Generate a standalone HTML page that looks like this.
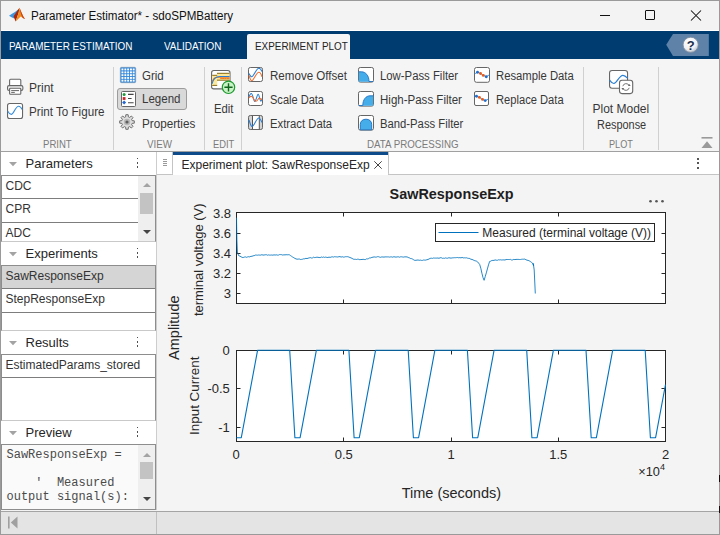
<!DOCTYPE html>
<html><head><meta charset="utf-8">
<style>
*{box-sizing:border-box;margin:0;padding:0}
html,body{width:720px;height:535px;overflow:hidden;background:#f3f3f3;font-family:"Liberation Sans",sans-serif;color:#222}
.a{position:absolute}
#win{position:absolute;left:0;top:0;width:720px;height:535px;overflow:hidden;background:#f3f3f3}
.t{position:absolute;white-space:nowrap;line-height:1}
</style></head><body>
<div id="win">
<!-- title bar -->
<div class="a" style="left:0;top:0;width:720px;height:30px;background:#f3f3f3"></div>
<div class="t" style="left:30.5px;top:9.6px;font-size:12.3px;color:#111;transform-origin:0 0;transform:scaleX(0.945)">Parameter Estimator* - sdoSPMBattery</div>
<svg class="a" style="left:0;top:0" width="30" height="30" viewBox="0 0 30 30">
 <path d="M9 15.8L12 13.8 15 12 18.5 9.2 17.8 13 15.5 16.8 14.2 18.6 12 17.5z" fill="#3f94dc"/>
 <path d="M13.6 16.2L16.5 12 19.5 7.8 18.6 13 17 17.5 15.6 21.6 14.4 18.5z" fill="#a8260e"/>
 <path d="M19.5 7.8L21.5 12.5 23.2 16.2 25 18.9 22.8 18.1 20.8 16.6 18.2 19 15.6 21.6 17 17.5 18.6 13z" fill="#ef8a1c"/>
 <path d="M19.5 7.8L21.5 12.5 23.2 16.2 25 18.9 22.8 18.1 21.3 15 20.2 11z" fill="#c8401a"/>
</svg>
<!-- window controls -->
<div class="a" style="left:600px;top:15px;width:10px;height:1px;background:#111"></div>
<div class="a" style="left:645px;top:10px;width:10px;height:10px;border:1px solid #111;border-radius:1px"></div>
<svg class="a" style="left:690px;top:10px" width="12" height="11" viewBox="0 0 12 11"><path d="M1 0.5L11 10.5M11 0.5L1 10.5" stroke="#111" stroke-width="1.05"/></svg>

<!-- tab bar -->
<div class="a" style="left:0;top:30px;width:720px;height:1px;background:#fff"></div>
<div class="a" style="left:0;top:31px;width:720px;height:28px;background:#003c70"></div>
<div class="t" style="left:9px;top:40.6px;font-size:11px;color:#fff;transform-origin:0 0;transform:scaleX(0.9)">PARAMETER ESTIMATION</div>
<div class="t" style="left:164px;top:40.6px;font-size:11px;color:#fff;transform-origin:0 0;transform:scaleX(0.9)">VALIDATION</div>
<div class="a" style="left:247px;top:34px;width:103px;height:25px;background:#f5f5f5;border-radius:2px 2px 0 0"></div>
<svg class="a" style="left:660px;top:31px" width="60" height="28" viewBox="0 0 60 28">
 <path d="M6.2 13.8L13 3H48.8V25H13z" fill="#5f82a9"/>
 <defs><radialGradient id="hg" cx="0.4" cy="0.3" r="0.8"><stop offset="0" stop-color="#fff"/><stop offset="0.6" stop-color="#eef1f5"/><stop offset="1" stop-color="#aab4c0"/></radialGradient></defs>
 <circle cx="30.7" cy="13.8" r="7.6" fill="url(#hg)" stroke="#7a8898" stroke-width="0.8"/>
 <text x="30.7" y="18.6" font-size="13" font-weight="bold" fill="#1d2f4a" text-anchor="middle" font-family="Liberation Sans, sans-serif">?</text>
</svg>
<div class="t" style="left:255px;top:40.6px;font-size:11px;color:#222;transform-origin:0 0;transform:scaleX(0.9)">EXPERIMENT PLOT</div>

<!-- ribbon -->
<div class="a" style="left:0;top:59px;width:720px;height:93px;background:#f5f5f5;border-bottom:1px solid #a0a0a0"></div>


<!-- ribbon content -->
<style>
.rt{position:absolute;white-space:nowrap;line-height:1;font-size:12px;color:#383838;transform-origin:0 0}
.sl{position:absolute;white-space:nowrap;line-height:1;font-size:11px;color:#7b7b7b;transform-origin:0 0}
.sep{position:absolute;width:1px;background:#d0d0d0;top:67px;height:83px}
.ic{position:absolute;overflow:visible}
</style>
<div class="sep" style="left:113px"></div>
<div class="sep" style="left:204px"></div>
<div class="sep" style="left:241px"></div>
<div class="sep" style="left:583px"></div>
<div class="sep" style="left:658px"></div>

<!-- PRINT -->
<svg class="ic" style="left:7px;top:79px" width="16" height="16" viewBox="0 0 16 16">
 <path d="M2.6 6.6V1.3a1 1 0 0 1 1-1h9.2a1 1 0 0 1 1 1v5.3" fill="#fff" stroke="#666" stroke-width="1.1"/>
 <rect x="0.55" y="6.6" width="15.3" height="4.8" rx="1.5" fill="#f2f2f2" stroke="#666" stroke-width="1.1"/>
 <rect x="2.6" y="9.3" width="11.2" height="6" rx="0.8" fill="#fff" stroke="#666" stroke-width="1.1"/>
 <path d="M4.2 11.6h7.8M4.2 13.4h3.6" stroke="#666" stroke-width="1"/>
</svg>
<div class="rt" style="left:29px;top:81.7px">Print</div>
<svg class="ic" style="left:7px;top:103px" width="16" height="16" viewBox="0 0 16 16">
 <rect x="0.55" y="0.55" width="15" height="15" rx="2" fill="#fff" stroke="#666" stroke-width="1.1"/>
 <path d="M0.8 8.3C2 10.5 3.2 11.4 4.3 11.4C6.5 11.4 8.5 3.3 11.6 3.3C13 3.3 14.3 4.8 15.2 6.6" fill="none" stroke="#3a8fd9" stroke-width="1.1"/>
</svg>
<div class="rt" style="left:29px;top:105.8px;transform:scaleX(0.97)">Print To Figure</div>
<div class="sl" style="left:43px;top:138.7px;transform:scaleX(0.87)">PRINT</div>

<!-- VIEW -->
<svg class="ic" style="left:120px;top:67px" width="16" height="16" viewBox="0 0 16 16">
 <rect x="0.3" y="0.3" width="15.4" height="15.4" rx="1.2" fill="#2f87dc" stroke="#7f96ad" stroke-width="0.6"/>
 <g fill="#fff">
 <rect x="1.5" y="1.5" width="1.9" height="1.9"/><rect x="4.4" y="1.5" width="1.9" height="1.9"/><rect x="7.2" y="1.5" width="1.9" height="1.9"/><rect x="10" y="1.5" width="1.9" height="1.9"/><rect x="12.7" y="1.5" width="1.9" height="1.9"/>
 <rect x="1.5" y="4.4" width="1.9" height="1.9"/><rect x="4.4" y="4.4" width="1.9" height="1.9"/><rect x="7.2" y="4.4" width="1.9" height="1.9"/><rect x="10" y="4.4" width="1.9" height="1.9"/><rect x="12.7" y="4.4" width="1.9" height="1.9"/>
 <rect x="1.5" y="7.2" width="1.9" height="1.9"/><rect x="4.4" y="7.2" width="1.9" height="1.9"/><rect x="7.2" y="7.2" width="1.9" height="1.9"/><rect x="10" y="7.2" width="1.9" height="1.9"/><rect x="12.7" y="7.2" width="1.9" height="1.9"/>
 <rect x="1.5" y="10" width="1.9" height="1.9"/><rect x="4.4" y="10" width="1.9" height="1.9"/><rect x="7.2" y="10" width="1.9" height="1.9"/><rect x="10" y="10" width="1.9" height="1.9"/><rect x="12.7" y="10" width="1.9" height="1.9"/>
 <rect x="1.5" y="12.7" width="1.9" height="1.9"/><rect x="4.4" y="12.7" width="1.9" height="1.9"/><rect x="7.2" y="12.7" width="1.9" height="1.9"/><rect x="10" y="12.7" width="1.9" height="1.9"/><rect x="12.7" y="12.7" width="1.9" height="1.9"/>
 </g>
</svg>
<div class="rt" style="left:142.3px;top:70.2px;transform:scaleX(0.96)">Grid</div>
<div class="a" style="left:117px;top:88px;width:70px;height:21.5px;background:#d9d9d9;border:1px solid #9c9c9c;border-radius:3px"></div>
<svg class="ic" style="left:121px;top:91px" width="15" height="16" viewBox="0 0 15 16">
 <rect x="0.5" y="0.5" width="14" height="15" rx="1" fill="#fff" stroke="#666" stroke-width="1"/>
 <circle cx="3.1" cy="3.4" r="1.5" fill="#1f9a3a"/><rect x="1.7" y="6.1" width="2.8" height="2.8" fill="#c8262a"/><path d="M3.1 9.6l2 2-2 2-2-2z" fill="#2468d0"/>
 <path d="M7 3.4h5.6M7 7.5h3.6M7 11.7h5.6" stroke="#444" stroke-width="1.1"/>
</svg>
<div class="rt" style="left:142.3px;top:93.4px;transform:scaleX(0.96)">Legend</div>
<svg class="ic" style="left:119.4px;top:114.1px" width="16" height="16" viewBox="0 0 16 16">
 <path fill="#dedede" stroke="#6e6e6e" stroke-width="1" stroke-linejoin="round" d="M6.64 2.88 L6.84 0.69 L9.16 0.69 L9.36 2.88 L10.66 3.42 L12.35 2.01 L13.99 3.65 L12.58 5.34 L13.12 6.64 L15.31 6.84 L15.31 9.16 L13.12 9.36 L12.58 10.66 L13.99 12.35 L12.35 13.99 L10.66 12.58 L9.36 13.12 L9.16 15.31 L6.84 15.31 L6.64 13.12 L5.34 12.58 L3.65 13.99 L2.01 12.35 L3.42 10.66 L2.88 9.36 L0.69 9.16 L0.69 6.84 L2.88 6.64 L3.42 5.34 L2.01 3.65 L3.65 2.01 L5.34 3.42z"/>
 <circle cx="8" cy="8" r="3.2" fill="#b8b8b8"/><circle cx="8" cy="8" r="1.6" fill="#5e5e5e"/>
</svg>
<div class="rt" style="left:142.3px;top:118px;transform:scaleX(0.975)">Properties</div>
<div class="sl" style="left:147px;top:138.7px;transform:scaleX(0.89)">VIEW</div>

<!-- EDIT -->
<svg class="ic" style="left:211px;top:70px" width="25" height="25" viewBox="0 0 25 25">
 <rect x="0.6" y="0.5" width="18.4" height="18.4" rx="2.2" fill="#fff" stroke="#666" stroke-width="1.1"/>
 <rect x="1.2" y="5.3" width="5" height="10" fill="#fde89a"/>
 <rect x="6" y="3.2" width="12.5" height="7" fill="#fde89a"/>
 <path d="M1.2 5.3h5M1.2 15.4h5M6 3.3h12.5M6 10.2h12.5" stroke="#7a5a00" stroke-width="0.9"/>
 <path d="M1 12C2.5 8 4 7 9 7.2H18.5" fill="none" stroke="#f07820" stroke-width="1.1"/>
 <path d="M1 13.8C2.5 9 4 6.5 9 6.5H18.5" fill="none" stroke="#2a7fd4" stroke-width="1.1"/>
 <path d="M9 8.2C12 8.8 14 8.4 18.5 8.6" fill="none" stroke="#f07820" stroke-width="1"/>
 <circle cx="17.5" cy="17.3" r="6.2" fill="#c9f3c6" stroke="#1e9a30" stroke-width="1.2"/>
 <path d="M17.5 13.2v8.2M13.4 17.3h8.2" stroke="#10661c" stroke-width="1.4"/>
</svg>
<div class="rt" style="left:214px;top:103.2px;transform:scaleX(0.94)">Edit</div>
<div class="sl" style="left:212.7px;top:138.7px;transform:scaleX(0.85)">EDIT</div>

<!-- DATA PROCESSING -->
<svg class="ic" style="left:248px;top:67px" width="15" height="15" viewBox="0 0 15 15">
 <rect x="0.5" y="0.5" width="14" height="14" rx="1.8" fill="#fff" stroke="#666" stroke-width="1"/>
 <path d="M1 6.5C2 8.5 2.8 9.8 3.6 9.8C6 9.8 8 1.3 10.9 1.3C12.3 1.3 13.3 3 14 4.6" fill="none" stroke="#2a7fd4" stroke-width="1.1"/>
 <path d="M1 8.5C2 11.5 2.8 13.8 3.6 13.8C6 13.8 8 5.2 10.9 5.2C12.3 5.2 13.3 7.5 14 9.8" fill="none" stroke="#f07030" stroke-width="1.1"/>
</svg>
<div class="rt" style="left:270px;top:69.8px;transform:scaleX(0.965)">Remove Offset</div>
<svg class="ic" style="left:248px;top:91px" width="15" height="15" viewBox="0 0 15 15">
 <rect x="0.5" y="0.5" width="14" height="14" rx="1.8" fill="#fff" stroke="#666" stroke-width="1"/>
 <path d="M1 6C1.8 3.5 2.6 2.5 3.3 2.5C4.8 2.5 5.5 10.5 6.8 10.5S9 3.2 10.1 3.2S12 10.2 12.8 10.2C13.4 10.2 13.8 8.5 14.2 7.5" fill="none" stroke="#2a7fd4" stroke-width="1.1"/>
 <path d="M1 7C2 5.5 3 5 4 5.6C5.5 6.5 6.2 10 7.8 10.3C9.5 10.6 10 7.5 11 7.2C12.2 6.9 13 8.5 14.2 8.8" fill="none" stroke="#f07030" stroke-width="1.1"/>
</svg>
<div class="rt" style="left:270px;top:93.6px;transform:scaleX(0.92)">Scale Data</div>
<svg class="ic" style="left:248px;top:115px" width="15" height="15" viewBox="0 0 15 15">
 <rect x="0.5" y="0.5" width="14" height="14" rx="1.8" fill="#d4d4d4" stroke="#666" stroke-width="1"/>
 <rect x="4.5" y="1" width="6.8" height="13" fill="#fff"/>
 <path d="M4.5 1v13M11.3 1v13" stroke="#555" stroke-width="1"/>
 <path d="M1 5C2 8 2.8 11.5 4 11.5C6 11.5 8.5 3 10.8 3C12 3 13 5.5 14 7.5" fill="none" stroke="#2a7fd4" stroke-width="1.1"/>
</svg>
<div class="rt" style="left:270px;top:117.6px;transform:scaleX(0.94)">Extract Data</div>

<svg class="ic" style="left:358px;top:67px" width="16" height="16" viewBox="0 0 16 16">
 <rect x="0.5" y="0.5" width="15" height="14.6" rx="1.8" fill="#fff" stroke="#666" stroke-width="1"/>
 <path d="M0.8 4.8H3.5C7.5 4.8 11 8.5 11 14.8H0.8z" fill="#45aeea"/>
 <path d="M0.8 4.8H3.5C7.5 4.8 11 8.5 11 14.5H15.2" fill="none" stroke="#1f6fbf" stroke-width="0.9"/>
</svg>
<div class="rt" style="left:380px;top:69.8px;transform:scaleX(0.945)">Low-Pass Filter</div>
<svg class="ic" style="left:358px;top:91px" width="16" height="16" viewBox="0 0 16 16">
 <rect x="0.5" y="0.5" width="15" height="14.6" rx="1.8" fill="#fff" stroke="#666" stroke-width="1"/>
 <path d="M15.2 4.8H12C8 4.8 4.8 8.5 4.8 14.8H15.2z" fill="#45aeea"/>
 <path d="M15.2 4.8H12C8 4.8 4.8 8.5 4.8 14.5H0.8" fill="none" stroke="#1f6fbf" stroke-width="0.9"/>
</svg>
<div class="rt" style="left:380px;top:93.6px;transform:scaleX(0.96)">High-Pass Filter</div>
<svg class="ic" style="left:358px;top:115px" width="16" height="16" viewBox="0 0 16 16">
 <rect x="0.5" y="0.5" width="15" height="14.6" rx="1.8" fill="#fff" stroke="#666" stroke-width="1"/>
 <path d="M2.3 14.8V9.5C2.3 6 4.8 4.2 8 4.2S13.7 6 13.7 9.5V14.8z" fill="#45aeea" stroke="#1f6fbf" stroke-width="0.9"/>
</svg>
<div class="rt" style="left:380px;top:117.6px;transform:scaleX(0.94)">Band-Pass Filter</div>

<svg class="ic" style="left:474px;top:67px" width="16" height="16" viewBox="0 0 16 16">
 <rect x="0.5" y="0.5" width="15" height="14.8" rx="2" fill="#fff" stroke="#666" stroke-width="1"/>
 <path d="M0.6 6.8L3.5 5.3 6.5 6.5 9.3 8.4 12.3 9.7 15.4 7.8" fill="none" stroke="#2a7fd4" stroke-width="0.8"/>
 <circle cx="3.5" cy="5.3" r="1.45" fill="#1f6fd0"/><circle cx="6.5" cy="6.5" r="1.45" fill="#e85a1a"/><circle cx="9.3" cy="8.4" r="1.45" fill="#e85a1a"/><circle cx="12.3" cy="9.7" r="1.45" fill="#1f6fd0"/>
</svg>
<div class="rt" style="left:496px;top:69.8px;transform:scaleX(0.94)">Resample Data</div>
<svg class="ic" style="left:474px;top:91px" width="15" height="15" viewBox="0 0 15 15">
 <rect x="0.5" y="0.5" width="14" height="14" rx="1.5" fill="#fff" stroke="#666" stroke-width="1"/>
 <path d="M0.6 5.2L2.5 5.3 5.4 6.4 8.5 8.4 11.2 9.6 14.4 8" fill="none" stroke="#2a7fd4" stroke-width="0.8"/>
 <circle cx="2.5" cy="5.3" r="1.45" fill="#1f6fd0"/><circle cx="5.4" cy="6.4" r="1.45" fill="#e85a1a"/><circle cx="8.5" cy="8.4" r="1.45" fill="#e85a1a"/><circle cx="11.2" cy="9.6" r="1.45" fill="#1f6fd0"/>
</svg>
<div class="rt" style="left:496px;top:93.6px;transform:scaleX(0.93)">Replace Data</div>
<div class="sl" style="left:366.8px;top:138.7px;transform:scaleX(0.885)">DATA PROCESSING</div>

<!-- PLOT -->
<svg class="ic" style="left:609px;top:70px" width="25" height="25" viewBox="0 0 25 25">
 <rect x="0.55" y="0.5" width="18" height="17.7" rx="2.5" fill="#fff" stroke="#666" stroke-width="1.1"/>
 <path d="M0.6 10.2C2 12.2 3.5 13.5 4.8 13.5C8 13.5 10 5.3 13.9 5.3C15.8 5.3 17.3 6.8 18.5 8.1" fill="none" stroke="#2a7fd4" stroke-width="1.2"/>
 <rect x="10.5" y="10.2" width="13.2" height="13.4" rx="2.5" fill="#fff" stroke="#666" stroke-width="1.1"/>
 <path d="M13.8 16.2a3.4 3.4 0 0 1 6.4 -0.6M20.2 17.8a3.4 3.4 0 0 1 -6.4 0.6" fill="none" stroke="#666" stroke-width="0.9"/>
 <path d="M18.9 16.1h2.8l-1.4 -2.2zM12.4 17.9h2.8l-1.4 2.2z" fill="#666"/>
</svg>
<div class="rt" style="left:592.5px;top:102.6px">Plot Model</div>
<div class="rt" style="left:596.5px;top:118.7px;transform:scaleX(0.91)">Response</div>
<div class="sl" style="left:608.8px;top:138.7px;transform:scaleX(0.83)">PLOT</div>
<svg class="ic" style="left:701px;top:137px" width="12" height="12" viewBox="0 0 12 12">
 <rect x="0.5" y="0" width="11" height="1.6" fill="#9a9a9a"/>
 <path d="M0.5 11L6 4.2 11.5 11z" fill="#9a9a9a"/>
</svg>
<!-- left panel -->
<div class="a" style="left:0;top:152px;width:157px;height:358px;background:#fff;border-right:1px solid #cdcdcd"></div>
<style>.li{position:absolute;white-space:nowrap;line-height:1;font-size:12px;color:#333}</style>
<div class="a" style="left:1px;top:152px;width:155px;height:23px;background:#fff"></div>
<svg class="a" style="left:9px;top:162px" width="8" height="5" viewBox="0 0 8 5"><path d="M0 0H8L4 4.3z" fill="#a3a3a3"/></svg>
<div class="t" style="left:25.5px;top:156.9px;font-size:13px;color:#262626">Parameters</div>
<div class="a" style="left:136.7px;top:157.7px;width:1.7px;height:1.7px;background:#505050"></div>
<div class="a" style="left:136.7px;top:162.0px;width:1.7px;height:1.7px;background:#505050"></div>
<div class="a" style="left:136.7px;top:166.4px;width:1.7px;height:1.7px;background:#505050"></div>

<div class="a" style="left:1px;top:175px;width:155px;height:67px;background:#fff;border:1px solid #8d8d8d;border-bottom-color:#c9c9c9"></div>
<div class="li" style="left:5.5px;top:179.5px">CDC</div>
<div class="a" style="left:2px;top:198px;width:136px;height:1px;background:#7d7d7d"></div>
<div class="li" style="left:5.5px;top:203px">CPR</div>
<div class="a" style="left:2px;top:222px;width:136px;height:1px;background:#7d7d7d"></div>
<div class="li" style="left:5.5px;top:227px">ADC</div>
<div class="a" style="left:138px;top:176px;width:17px;height:65px;background:#efefef"></div>
<svg class="a" style="left:143px;top:183px" width="8" height="4" viewBox="0 0 8 4"><path d="M0 4H8L4 0z" fill="#a3a3a3"/></svg>
<div class="a" style="left:140px;top:193px;width:13px;height:21px;background:#c3c3c3"></div>
<svg class="a" style="left:143px;top:230px" width="8" height="4" viewBox="0 0 8 4"><path d="M0 0H8L4 4z" fill="#454545"/></svg>
<div class="a" style="left:1px;top:242px;width:155px;height:23px;background:#fff"></div>
<svg class="a" style="left:9px;top:252px" width="8" height="5" viewBox="0 0 8 5"><path d="M0 0H8L4 4.3z" fill="#a3a3a3"/></svg>
<div class="t" style="left:25.5px;top:246.9px;font-size:13px;color:#262626">Experiments</div>
<div class="a" style="left:136.7px;top:247.7px;width:1.7px;height:1.7px;background:#505050"></div>
<div class="a" style="left:136.7px;top:252.0px;width:1.7px;height:1.7px;background:#505050"></div>
<div class="a" style="left:136.7px;top:256.4px;width:1.7px;height:1.7px;background:#505050"></div>

<div class="a" style="left:1px;top:265px;width:155px;height:66px;background:#fff;border:1px solid #8d8d8d;border-bottom-color:#c9c9c9"></div>
<div class="a" style="left:2px;top:266px;width:153px;height:22px;background:#d5d5d5"></div>
<div class="li" style="left:5.5px;top:269.5px">SawResponseExp</div>
<div class="a" style="left:2px;top:288px;width:153px;height:1px;background:#7d7d7d"></div>
<div class="li" style="left:5.5px;top:293px">StepResponseExp</div>
<div class="a" style="left:2px;top:312px;width:153px;height:1px;background:#7d7d7d"></div>
<div class="a" style="left:1px;top:331px;width:155px;height:23px;background:#fff"></div>
<svg class="a" style="left:9px;top:341px" width="8" height="5" viewBox="0 0 8 5"><path d="M0 0H8L4 4.3z" fill="#a3a3a3"/></svg>
<div class="t" style="left:25.5px;top:335.9px;font-size:13px;color:#262626">Results</div>
<div class="a" style="left:136.7px;top:336.7px;width:1.7px;height:1.7px;background:#505050"></div>
<div class="a" style="left:136.7px;top:341.0px;width:1.7px;height:1.7px;background:#505050"></div>
<div class="a" style="left:136.7px;top:345.4px;width:1.7px;height:1.7px;background:#505050"></div>

<div class="a" style="left:1px;top:354px;width:155px;height:67px;background:#fff;border:1px solid #8d8d8d;border-bottom-color:#c9c9c9"></div>
<div class="li" style="left:5.5px;top:358.5px">EstimatedParams_stored</div>
<div class="a" style="left:2px;top:377px;width:153px;height:1px;background:#7d7d7d"></div>
<div class="a" style="left:1px;top:421px;width:155px;height:23px;background:#fff"></div>
<svg class="a" style="left:9px;top:431px" width="8" height="5" viewBox="0 0 8 5"><path d="M0 0H8L4 4.3z" fill="#a3a3a3"/></svg>
<div class="t" style="left:25.5px;top:425.9px;font-size:13px;color:#262626">Preview</div>
<div class="a" style="left:136.7px;top:426.7px;width:1.7px;height:1.7px;background:#505050"></div>
<div class="a" style="left:136.7px;top:431.0px;width:1.7px;height:1.7px;background:#505050"></div>
<div class="a" style="left:136.7px;top:435.4px;width:1.7px;height:1.7px;background:#505050"></div>

<div class="a" style="left:1px;top:444px;width:155px;height:66px;background:#fafafa;border:1px solid #8d8d8d"></div>
<style>.mo{position:absolute;white-space:pre;line-height:1;font-family:"Liberation Mono",monospace;font-size:12px;color:#4a4a4a}</style>
<div class="mo" style="left:6.5px;top:449px">SawResponseExp =</div>
<div class="mo" style="left:6.5px;top:477px">    '  Measured</div>
<div class="mo" style="left:6.5px;top:491px">output signal(s):</div>
<div class="a" style="left:138px;top:445px;width:17px;height:64px;background:#efefef"></div>
<svg class="a" style="left:143px;top:453px" width="8" height="4" viewBox="0 0 8 4"><path d="M0 4H8L4 0z" fill="#a3a3a3"/></svg>
<div class="a" style="left:140px;top:462px;width:13px;height:17px;background:#c3c3c3"></div>
<svg class="a" style="left:143px;top:497px" width="8" height="4" viewBox="0 0 8 4"><path d="M0 0H8L4 4z" fill="#454545"/></svg>


<!-- doc area -->
<div class="a" style="left:157px;top:152px;width:563px;height:359px;background:#f4f4f4"></div>
<!-- tab strip -->
<div class="a" style="left:157px;top:152px;width:563px;height:23px;background:#fff;border-bottom:1px solid #c4c4c4"></div>
<div class="a" style="left:157px;top:152px;width:16px;height:23px;background:#fff;border-right:1px solid #c4c4c4;border-bottom:1px solid #c4c4c4;border-bottom-right-radius:2px"></div>
<div class="a" style="left:162.5px;top:159px;width:4.2px;height:1px;background:#9a9a9a"></div>
<div class="a" style="left:162.5px;top:161px;width:4.2px;height:1px;background:#9a9a9a"></div>
<div class="a" style="left:162.5px;top:163px;width:4.2px;height:1px;background:#9a9a9a"></div>
<div class="a" style="left:162.5px;top:165px;width:4.2px;height:1px;background:#9a9a9a"></div>
<div class="a" style="left:173px;top:152px;width:215px;height:23px;background:#fff"></div>
<div class="a" style="left:173px;top:152px;width:215px;height:2.6px;background:#0d4b8a"></div>
<div class="a" style="left:388px;top:152px;width:332px;height:23px;background:#fff;border-left:1px solid #c4c4c4;border-bottom:1px solid #c4c4c4;border-bottom-left-radius:2px"></div>
<div class="t" style="left:181.5px;top:159.4px;font-size:12px;color:#262626">Experiment plot: SawResponseExp</div>
<svg class="a" style="left:374px;top:161px" width="8" height="8" viewBox="0 0 8 8"><path d="M0.3 0.3L7.7 7.7M7.7 0.3L0.3 7.7" stroke="#444" stroke-width="1"/></svg>
<div class="a" style="left:697px;top:158px;width:2px;height:2px;background:#555"></div>
<div class="a" style="left:697px;top:162.4px;width:2px;height:2px;background:#555"></div>
<div class="a" style="left:697px;top:166.8px;width:2px;height:2px;background:#555"></div>

<!-- plot -->
<svg class="a" style="left:0;top:0" width="720" height="535" viewBox="0 0 720 535" font-family="Liberation Sans, sans-serif">
 <rect x="236.5" y="212.5" width="429" height="91" fill="#fff" stroke="#262626" stroke-width="1"/>
 <rect x="236.5" y="350.5" width="429" height="91" fill="#fff" stroke="#262626" stroke-width="1"/>
 <g stroke="#262626" stroke-width="1">
  <path d="M343.5 212.5v4M451.5 212.5v4M558.5 212.5v4M343.5 303.5v-4M451.5 303.5v-4M558.5 303.5v-4"/>
  <path d="M236.5 233.5h4M236.5 253.5h4M236.5 273.5h4M236.5 293.5h4M665.5 233.5h-4M665.5 253.5h-4M665.5 273.5h-4M665.5 293.5h-4"/>
  <path d="M343.5 350.5v4M451.5 350.5v4M558.5 350.5v4M343.5 441.5v-4M451.5 441.5v-4M558.5 441.5v-4"/>
  <path d="M236.5 388.5h4M236.5 427.5h4M665.5 388.5h-4M665.5 427.5h-4"/>
 </g>
 <path d="M236.5 217.7 L236.9 240.0 L237.4 252.0 L238.5 255.5 L238.8 255.5 L239.9 256.2 L241.0 256.7 L242.1 257.4 L243.2 257.5 L244.3 257.1 L245.4 256.9 L246.5 257.3 L247.6 256.9 L248.7 256.7 L249.8 256.9 L250.9 256.3 L252.0 256.3 L253.1 255.8 L254.2 255.7 L255.3 255.1 L256.4 255.1 L257.5 255.2 L258.6 255.0 L259.7 255.1 L260.8 255.1 L261.9 254.7 L263.0 255.1 L264.1 255.0 L265.2 254.8 L266.3 254.7 L267.4 255.2 L268.5 254.9 L269.6 255.1 L270.7 255.1 L271.8 255.0 L272.9 255.2 L274.0 254.8 L275.1 255.1 L276.2 254.8 L277.3 255.1 L278.4 255.1 L279.5 254.6 L280.6 254.6 L281.7 254.7 L282.8 255.1 L283.9 254.8 L285.0 254.9 L286.1 254.7 L287.2 254.8 L288.3 254.7 L289.4 254.8 L290.5 255.6 L291.6 256.3 L292.7 257.1 L293.8 257.7 L294.9 258.4 L296.0 258.9 L297.1 259.2 L298.2 259.1 L299.3 259.0 L300.4 259.5 L301.5 259.4 L302.6 259.2 L303.7 258.8 L304.8 258.8 L305.9 258.3 L307.0 258.6 L308.1 258.2 L309.2 257.9 L310.3 257.6 L311.4 258.0 L312.5 257.9 L313.6 257.2 L314.7 257.6 L315.8 257.4 L316.9 257.2 L318.0 257.3 L319.1 257.5 L320.2 257.6 L321.3 257.0 L322.4 257.4 L323.5 257.0 L324.6 257.4 L325.7 257.1 L326.8 257.4 L327.9 257.5 L329.0 257.1 L330.1 257.4 L331.2 257.0 L332.3 256.8 L333.4 257.1 L334.5 256.7 L335.6 256.8 L336.7 256.9 L337.8 257.0 L338.9 256.7 L340.0 256.6 L341.1 257.1 L342.2 256.7 L343.3 257.1 L344.4 257.0 L345.5 256.7 L346.6 256.7 L347.7 256.7 L348.8 257.0 L349.9 257.5 L351.0 257.9 L352.1 258.4 L353.2 259.1 L354.3 259.3 L355.4 259.3 L356.5 259.5 L357.6 259.2 L358.7 259.3 L359.8 259.7 L360.9 259.5 L362.0 259.5 L363.1 259.3 L364.2 259.5 L365.3 259.6 L366.4 258.9 L367.5 258.9 L368.6 258.6 L369.7 257.9 L370.8 257.9 L371.9 257.4 L373.0 257.2 L374.1 256.9 L375.2 257.1 L376.3 257.1 L377.4 256.7 L378.5 256.7 L379.6 257.1 L380.7 257.3 L381.8 256.9 L382.9 257.0 L384.0 257.1 L385.1 256.9 L386.2 256.9 L387.3 256.9 L388.4 256.9 L389.5 257.1 L390.6 256.9 L391.7 256.9 L392.8 257.2 L393.9 256.7 L395.0 257.0 L396.1 257.1 L397.2 256.9 L398.3 256.8 L399.4 257.2 L400.5 256.8 L401.6 256.8 L402.7 257.0 L403.8 257.1 L404.9 256.8 L406.0 256.9 L407.1 256.9 L408.2 257.5 L409.3 257.8 L410.4 258.5 L411.5 258.6 L412.6 259.1 L413.7 259.8 L414.8 260.4 L415.9 260.3 L417.0 260.1 L418.1 260.0 L419.2 260.3 L420.3 260.1 L421.4 260.4 L422.5 260.4 L423.6 260.0 L424.7 260.1 L425.8 260.1 L426.9 259.7 L428.0 259.5 L429.1 258.9 L430.2 258.4 L431.3 258.2 L432.4 258.4 L433.5 258.0 L434.6 258.1 L435.7 258.1 L436.8 258.1 L437.9 258.0 L439.0 258.3 L440.1 257.8 L441.2 257.7 L442.3 258.3 L443.4 258.2 L444.5 258.3 L445.6 257.9 L446.7 258.2 L447.8 258.2 L448.9 257.7 L450.0 258.0 L451.1 258.1 L452.2 257.9 L453.3 257.8 L454.4 257.7 L455.5 257.7 L456.6 257.6 L457.7 257.5 L458.8 257.8 L459.9 257.6 L461.0 257.9 L462.1 257.4 L463.2 257.9 L464.3 257.8 L465.4 257.9 L466.5 257.8 L467.6 258.2 L468.7 258.4 L469.8 258.5 L470.9 259.3 L472.0 259.4 L473.1 259.9 L474.2 260.5 L475.3 260.8 L476.4 261.1 L477.5 261.8 L478.6 263.1 L479.7 264.5 L480.8 268.2 L481.9 273.2 L483.0 277.6 L484.1 280.3 L485.2 276.7 L486.3 272.9 L487.4 268.9 L488.5 264.9 L489.6 261.5 L490.7 261.2 L491.8 260.5 L492.9 260.4 L494.0 260.4 L495.1 259.9 L496.2 260.2 L497.3 260.3 L498.4 259.8 L499.5 259.9 L500.6 259.8 L501.7 260.0 L502.8 259.9 L503.9 259.9 L505.0 260.0 L506.1 259.5 L507.2 259.5 L508.3 259.5 L509.4 259.5 L510.5 259.4 L511.6 260.0 L512.7 259.9 L513.8 259.4 L514.9 259.6 L516.0 259.4 L517.1 259.4 L518.2 259.4 L519.3 259.5 L520.4 259.5 L521.5 259.3 L522.6 259.2 L523.7 259.2 L524.8 259.1 L525.9 259.7 L527.0 260.2 L528.1 260.4 L529.2 260.8 L530.3 261.5 L531.4 262.3 L532.5 263.1 L533.6 265.8 L533.3 263.5 L534.2 270.0 L535.3 293.5" fill="none" stroke="#0072bd" stroke-width="0.85" stroke-linejoin="round"/>
 <path d="M236.5 437.7 L241.3 437.7 L257.6 350.2 L289.7 350.2 L294.9 437.7 L300.1 437.7 L316.4 350.2 L348.9 350.2 L354.1 437.7 L359.3 437.7 L375.6 350.2 L408.2 350.2 L413.4 437.7 L418.6 437.7 L434.9 350.2 L467.4 350.2 L472.6 437.7 L477.8 437.7 L494.1 350.2 L526.7 350.2 L531.9 437.7 L537.1 437.7 L553.4 350.2 L586.0 350.2 L591.2 437.7 L596.4 437.7 L612.7 350.2 L645.2 350.2 L650.4 437.7 L655.6 437.7 L665.5 384.6" fill="none" stroke="#0072bd" stroke-width="1.1" stroke-linejoin="round"/>
 <rect x="435.5" y="223.5" width="219" height="18" fill="#fff" stroke="#262626" stroke-width="1"/>
 <path d="M438.5 232.5H478.5" stroke="#0072bd" stroke-width="1.1"/>
 <text x="482.3" y="237" font-size="12" fill="#262626">Measured (terminal voltage (V))</text>
 <g font-size="13" fill="#262626" text-anchor="end">
  <text x="231" y="217.9">3.8</text><text x="231" y="238">3.6</text><text x="231" y="258.1">3.4</text><text x="231" y="278.2">3.2</text><text x="231" y="298.2">3</text>
  <text x="229.8" y="355">0</text><text x="229.8" y="393.4">-0.5</text><text x="229.8" y="431.8">-1</text>
 </g>
 <g font-size="13" fill="#262626" text-anchor="middle">
  <text x="236" y="459.2">0</text><text x="343.75" y="459.2">0.5</text><text x="451" y="459.2">1</text><text x="558.25" y="459.2">1.5</text><text x="665.5" y="459.2">2</text>
 </g>
 <text x="665" y="475.5" font-size="12.8" fill="#262626" text-anchor="end">×10<tspan font-size="9" dy="-5.5">4</tspan></text>
 <text x="451.4" y="498.1" font-size="14.5" fill="#262626" text-anchor="middle">Time (seconds)</text>
 <text x="451.6" y="199.2" font-size="14.4" font-weight="bold" fill="#1e1e1e" text-anchor="middle">SawResponseExp</text>
 <text transform="translate(203.1 316.1) rotate(-90)" font-size="13" fill="#262626">terminal voltage (V)</text>
 <text transform="translate(199 435) rotate(-90)" font-size="13.45" fill="#262626">Input Current</text>
 <text transform="translate(179.2 327.7) rotate(-90)" font-size="14.5" fill="#262626" text-anchor="middle">Amplitude</text>
 <g fill="#555"><circle cx="650.5" cy="201.3" r="1.3"/><circle cx="656.5" cy="201.3" r="1.3"/><circle cx="662.5" cy="201.3" r="1.3"/></g>
</svg>


<!-- status bar -->
<div class="a" style="left:0;top:511px;width:720px;height:24px;background:#e4e4e4;border-top:1px solid #a4a4a4;border-bottom:1px solid #9a9a9a"></div>
<div class="a" style="left:156px;top:512px;width:1px;height:22px;background:#c0c0c0"></div>
<svg class="a" style="left:8px;top:516px" width="10" height="13" viewBox="0 0 10 13"><rect x="0" y="0.5" width="1.6" height="12" fill="#a0a0a0"/><path d="M9.5 0.5V12.5L2.8 6.5z" fill="#a0a0a0"/></svg>
<!-- window border -->
<div class="a" style="left:0;top:0;width:720px;height:1px;background:#9a9a9a"></div>
<div class="a" style="left:0;top:0;width:1px;height:535px;background:#9a9a9a"></div>
<div class="a" style="left:719px;top:0;width:1px;height:535px;background:#9a9a9a"></div>
<div class="a" style="left:719px;top:475px;width:1px;height:7px;background:#111"></div>
<div class="a" style="left:719px;top:506px;width:1px;height:7px;background:#111"></div>
</div>
</body></html>
